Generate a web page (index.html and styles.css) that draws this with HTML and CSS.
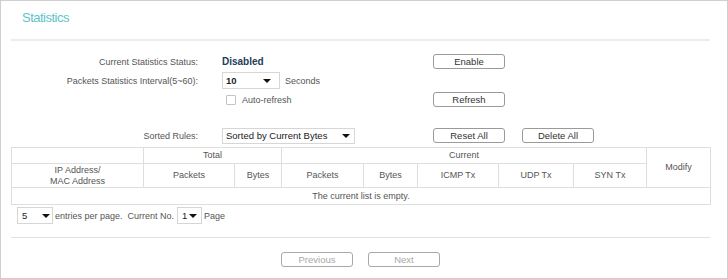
FILE: index.html
```html
<!DOCTYPE html>
<html lang="en">
<head>
    <meta charset="UTF-8">
    <meta name="viewport" content="width=device-width, initial-scale=1.0">
    <title>Statistics</title>
    <link rel="stylesheet" href="styles.css">
</head>
<body>
    <div class="panel">
        <h2 class="panel-title">Statistics</h2>
        <div class="divider"></div>

        <!-- Settings -->
        <div class="form">
            <div class="form-row">
                <span class="label">Current Statistics Status:</span>
                <span class="value"><b class="status">Disabled</b></span>
                <span class="cell"><button class="btn">Enable</button></span>
            </div>
            <div class="form-row">
                <span class="label">Packets Statistics Interval(5~60):</span>
                <span class="value">
                    <span class="select select-interval"><span class="select-text">10</span><i class="arrow"></i></span>
                    <span class="unit">Seconds</span>
                </span>
            </div>
            <div class="form-row">
                <span class="label"></span>
                <span class="value">
                    <span class="checkbox"></span>
                    <span class="check-label">Auto-refresh</span>
                </span>
                <span class="cell"><button class="btn">Refresh</button></span>
            </div>
            <div class="form-row sort-row">
                <span class="label">Sorted Rules:</span>
                <span class="value">
                    <span class="select select-sort"><span class="select-text">Sorted by Current Bytes</span><i class="arrow"></i></span>
                </span>
                <span class="cell"><button class="btn">Reset All</button></span>
                <span class="cell"><button class="btn">Delete All</button></span>
            </div>
        </div>

        <!-- Statistics table -->
        <table class="stats-table">
            <colgroup>
                <col style="width:132px"><col style="width:91px"><col style="width:47px">
                <col style="width:82px"><col style="width:54px"><col style="width:81px">
                <col style="width:75px"><col style="width:73px"><col style="width:64px">
            </colgroup>
            <tr class="head-top">
                <th></th>
                <th colspan="2">Total</th>
                <th colspan="5">Current</th>
                <th rowspan="2">Modify</th>
            </tr>
            <tr class="head-sub">
                <th>IP Address/<br>MAC Address</th>
                <th>Packets</th>
                <th>Bytes</th>
                <th>Packets</th>
                <th>Bytes</th>
                <th>ICMP Tx</th>
                <th>UDP Tx</th>
                <th>SYN Tx</th>
            </tr>
            <tr class="empty-row">
                <td colspan="9">The current list is empty.</td>
            </tr>
        </table>

        <div class="paging">
            <span class="select select-count"><span class="select-text">5</span><i class="arrow"></i></span>
            <span class="paging-text">entries per page.&nbsp;&nbsp;Current No.</span>
            <span class="select select-page"><span class="select-text">1</span><i class="arrow"></i></span>
            <span class="paging-text">Page</span>
        </div>

        <div class="divider thin"></div>

        <div class="footer">
            <button class="btn" disabled>Previous</button>
            <button class="btn" disabled>Next</button>
        </div>
    </div>
</body>
</html>
```

FILE: styles.css
```css
/* General Styles */
body {
    font-family: 'Liberation Sans', Arial, sans-serif;
    font-size: 9px;
    margin: 0;
    padding: 0;
    background-color: #fff;
    color: #555;
}

.panel {
    width: 728px;
    height: 279px;
    box-sizing: border-box;
    border: 1px solid #cfcfcf;
}

.panel-title {
    margin: 0 0 13px 0;
    padding: 9px 0 0 21px;
    line-height: 16px;
    font-size: 13px;
    letter-spacing: -0.5px;
    font-weight: normal;
    color: #5ec4cc;
}

.divider {
    height: 2px;
    margin: 0 17px 0 10px;
    background-color: #ececec;
}

.divider.thin {
    height: 1px;
    background-color: #e0e0e0;
}

/* Form Styles */
.form {
    padding-top: 11px;
}

.form-row {
    display: grid;
    grid-template-columns: 221px 211px 89px 72px;
    height: 19px;
    align-items: center;
}

.sort-row {
    margin-top: 17px;
}

.label {
    text-align: right;
    padding-right: 24px;
}

.value {
    display: flex;
    align-items: center;
}

.status {
    font-size: 10px;
    color: #233c58;
}

.unit {
    margin-left: 5px;
}

.checkbox {
    width: 8px;
    height: 8px;
    margin-left: 4px;
    border: 1px solid #c4c4c4;
    border-radius: 1px;
}

.check-label {
    margin-left: 6px;
}

/* Custom select boxes */
.select {
    position: relative;
    display: inline-flex;
    align-items: center;
    box-sizing: border-box;
    border: 1px solid #d6d6d6;
    background-color: #fff;
    color: #222;
    font-size: 9.5px;
}

.select-text {
    padding-left: 3px;
}

.arrow {
    position: absolute;
    top: 50%;
    margin-top: -2px;
    width: 0;
    height: 0;
    border-left: 4px solid transparent;
    border-right: 4px solid transparent;
    border-top: 4px solid #111;
}

.select-interval {
    width: 58px;
    height: 17px;
}

.select-interval .select-text {
    font-weight: bold;
}

.select-interval .arrow {
    right: 8px;
}

.select-sort {
    width: 133px;
    height: 16px;
}

.select-sort .arrow {
    right: 4px;
}

.select-count {
    width: 36px;
    height: 17px;
}

.select-count .select-text {
    padding-left: 4px;
}

.select-count .arrow {
    right: 2px;
}

.select-page {
    width: 25px;
    height: 17px;
    margin-left: 3px;
}

.select-page .select-text {
    padding-left: 4px;
}

.select-page .arrow {
    right: 4px;
}

/* Buttons */
.btn {
    width: 72px;
    height: 15px;
    padding: 0;
    border: 1px solid #9a9a9a;
    border-radius: 3px;
    background-color: #fff;
    font-family: 'Liberation Sans', Arial, sans-serif;
    font-size: 9.5px;
    line-height: 13px;
    color: #333;
    cursor: pointer;
}

.btn:disabled {
    color: #a8a8a8;
    border-color: #a8a8a8;
    cursor: default;
}

/* Table */
.stats-table {
    margin: 2px 0 0 10px;
    width: 700px;
    table-layout: fixed;
    border-collapse: collapse;
}

.stats-table th,
.stats-table td {
    border: 1px solid #dedede;
    padding: 0;
    font-weight: normal;
    text-align: center;
    color: #555;
    line-height: 11px;
}

.head-top th {
    height: 15px;
}

.head-sub th {
    height: 23px;
}

.empty-row td {
    height: 16px;
}

/* Paging */
.paging {
    display: flex;
    align-items: center;
    margin: 2px 0 13px 16px;
    height: 17px;
}

.paging-text {
    margin-left: 2px;
}

.footer {
    display: flex;
    gap: 15px;
    padding: 14px 0 0 280px;
}
```
